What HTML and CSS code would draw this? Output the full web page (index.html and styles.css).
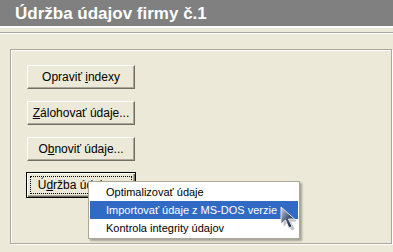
FILE: index.html
```html
<!DOCTYPE html>
<html lang="sk">
<head>
    <meta charset="UTF-8">
    <title>Údržba údajov firmy č.1</title>
    <link rel="stylesheet" href="styles.css">
</head>
<body>
    <div class="title-bar">Údržba údajov firmy č.1</div>
    <div class="separator"></div>

    <div class="group-box">
        <button class="btn">Opraviť <u>i</u>ndexy</button>
        <button class="btn"><u>Z</u>álohovať údaje...</button>
        <button class="btn">O<u>b</u>noviť údaje...</button>
        <button class="btn btn-default"><span class="focus">Ú<u>d</u>ržba údajov...</span></button>
    </div>

    <!-- popup menu of the last button -->
    <div class="popup-menu">
        <div class="menu-item">Optimalizovať údaje</div>
        <div class="menu-item active">Importovať údaje z MS-DOS verzie</div>
        <div class="menu-item">Kontrola integrity údajov</div>
    </div>

    <svg class="cursor" width="20" height="27" viewBox="0 0 20 27">
        <defs>
            <linearGradient id="cur" x1="0" y1="0" x2="1" y2="1">
                <stop offset="0" stop-color="#c9d4e6"/>
                <stop offset="0.5" stop-color="#4b5a7a"/>
                <stop offset="1" stop-color="#0d1530"/>
            </linearGradient>
        </defs>
        <path d="M3 2 L3 19 L7.5 15 L11 23 L14 21.5 L10.5 14 L16.5 14 Z" fill="rgba(0,0,0,0.25)" transform="translate(1.5 1.5)"/>
        <path d="M2 1 L2 18 L6.5 14 L10 22 L13 20.5 L9.5 13 L15.5 13 Z" fill="url(#cur)" stroke="#fff" stroke-width="0.8"/>
    </svg>
</body>
</html>
```

FILE: styles.css
```css
body {
    margin: 0;
    background-color: #ece9d8;
    font-family: "Liberation Sans", Arial, sans-serif;
    font-size: 12px;
    color: #000;
    position: relative;
    height: 252px;
    overflow: hidden;
}

.title-bar {
    height: 28px;
    line-height: 28px;
    padding-left: 15px;
    background-color: #808080;
    border-bottom: 2px solid #fff;
    color: #fff;
    font-weight: bold;
    font-size: 17px;
    box-sizing: border-box;
}

.separator {
    margin-top: 4px;
    border-top: 1px solid #aca899;
    border-bottom: 1px solid #fff;
}

.group-box {
    margin: 15px 0 0 10px;
    width: 364px;
    height: 178px;
    border: 1px solid #aca899;
    box-shadow: 1px 1px 0 #fff, inset 1px 1px 0 #fff;
    padding: 15px 0 0 16px;
    box-sizing: content-box;
    display: flex;
    flex-direction: column;
    align-items: flex-start;
    gap: 12px;
}

.btn {
    width: 108px;
    height: 24px;
    padding: 0;
    background-color: #ece9d8;
    border: 1px solid;
    border-color: #fff #716f64 #716f64 #fff;
    box-shadow: inset -1px -1px 0 #aca899;
    font-family: "Liberation Sans", Arial, sans-serif;
    font-size: 12px;
    color: #000;
}

.btn u {
    text-underline-offset: 1px;
}

.btn-default {
    width: 110px;
    height: 26px;
    margin: -1px 0 0 -1px;
    border: 1px solid #000;
    box-shadow: inset 1px 1px 0 #fff, inset -1px -1px 0 #716f64, inset -2px -2px 0 #aca899;
    padding: 3px;
}

.btn-default .focus {
    display: block;
    height: 100%;
    box-sizing: border-box;
    border: 1px dotted #000;
    line-height: 16px;
    white-space: nowrap;
    overflow: hidden;
}

.popup-menu {
    position: absolute;
    left: 88px;
    top: 181px;
    width: 208px;
    padding: 1px;
    background-color: #fff;
    border: 1px solid #aca899;
    box-shadow: 2px 2px 2px rgba(0, 0, 0, 0.3);
}

.menu-item {
    height: 18px;
    line-height: 18px;
    padding-left: 16px;
    font-size: 11px;
    white-space: nowrap;
}

.menu-item.active {
    background-color: #316ac5;
    color: #fff;
}

.cursor {
    position: absolute;
    left: 279px;
    top: 206px;
}
```
